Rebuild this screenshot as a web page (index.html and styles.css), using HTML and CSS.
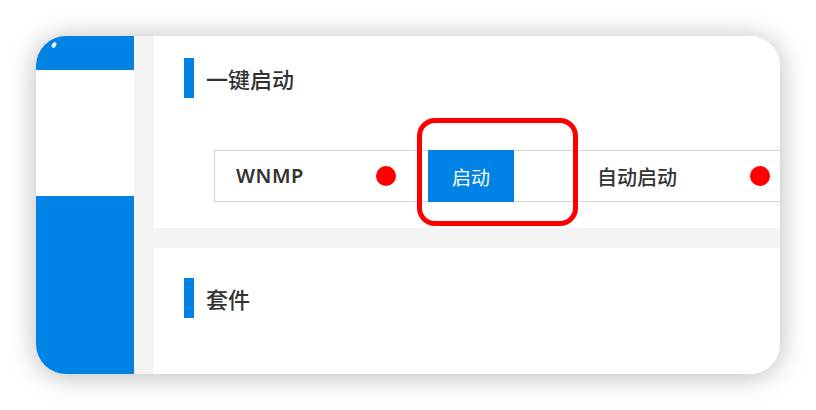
FILE: index.html
```html
<!DOCTYPE html>
<html>
<head>
  <title>WNMP</title>
  <link rel="stylesheet" href="styles.css">
</head>
<body>
  <div class="window">
    <div class="sidebar">
      <div class="side-top"><span class="glint"></span></div>
      <div class="side-mid"></div>
      <div class="side-bottom"></div>
    </div>
    <div class="main">
      <div class="card card-start">
        <h2 class="title">一键启动</h2>
        <div class="row">
          <span class="name">WNMP</span>
          <span class="dot"></span>
          <button class="btn">启动</button>
          <span class="label">自动启动</span>
          <span class="dot"></span>
        </div>
        <div class="mark"></div>
      </div>
      <div class="card card-suite">
        <h2 class="title">套件</h2>
      </div>
    </div>
  </div>
</body>
</html>
```

FILE: styles.css
```css
/* Page */
body {
  margin: 0;
  background: #fff;
  font-family: "Noto Sans CJK SC", "Noto Sans", sans-serif;
  color: #333;
}

/* Window */
.window {
  margin: 36px;
  width: 744px;
  height: 338px;
  border-radius: 30px;
  overflow: hidden;
  display: flex;
  background: #fff;
  box-shadow: 0 2px 28px rgba(0, 0, 0, 0.28);
}

/* Sidebar */
.sidebar {
  width: 98px;
  display: flex;
  flex-direction: column;
}

.side-top {
  height: 34px;
  background: #0083e5;
  position: relative;
}

.glint {
  position: absolute;
  left: 16px;
  top: 6px;
  width: 4px;
  height: 6px;
  background: #e8f4ff;
  border-radius: 2px;
  transform: rotate(35deg);
}

.side-mid {
  height: 126px;
  background: #fff;
}

.side-bottom {
  flex: 1;
  background: #0083e5;
}

/* Content */
.main {
  flex: 1;
  background: #f4f4f4;
  padding-left: 20px;
  display: flex;
  flex-direction: column;
  gap: 20px;
}

.card {
  background: #fff;
  position: relative;
}

.card-start {
  height: 192px;
  padding-top: 22px;
  box-sizing: border-box;
}

.card-suite {
  flex: 1;
  padding-top: 30px;
}

.title {
  margin: 0 0 0 30px;
  height: 40px;
  display: flex;
  align-items: center;
  font-size: 22px;
  font-weight: 500;
  color: #333;
}

.title::before {
  content: "";
  width: 10px;
  height: 40px;
  background: #0083e5;
  margin-right: 12px;
}

/* Service row */
.row {
  margin: 52px 0 0 60px;
  height: 50px;
  border: 1px solid #d4d4d4;
  border-right: none;
  padding-left: 21px;
  display: flex;
  align-items: center;
}

.name {
  width: 140px;
  font-size: 20px;
  font-weight: 600;
  letter-spacing: 0.5px;
  margin-top: -2px;
  font-family: "Noto Sans", sans-serif;
}

.dot {
  width: 20px;
  height: 20px;
  border-radius: 50%;
  background: #ff0000;
}

.btn {
  margin: -1px 0 -1px 32px;
  width: 86px;
  align-self: stretch;
  border: none;
  background: #0083e5;
  color: #fff;
  font-family: inherit;
  font-size: 19px;
  cursor: pointer;
}

.label {
  margin-left: 83px;
  width: 153px;
  font-size: 20px;
  font-weight: 500;
}

/* Annotation */
.mark {
  position: absolute;
  left: 263px;
  top: 82px;
  width: 151px;
  height: 98px;
  border: 5px solid #f00;
  border-radius: 18px;
}
```
